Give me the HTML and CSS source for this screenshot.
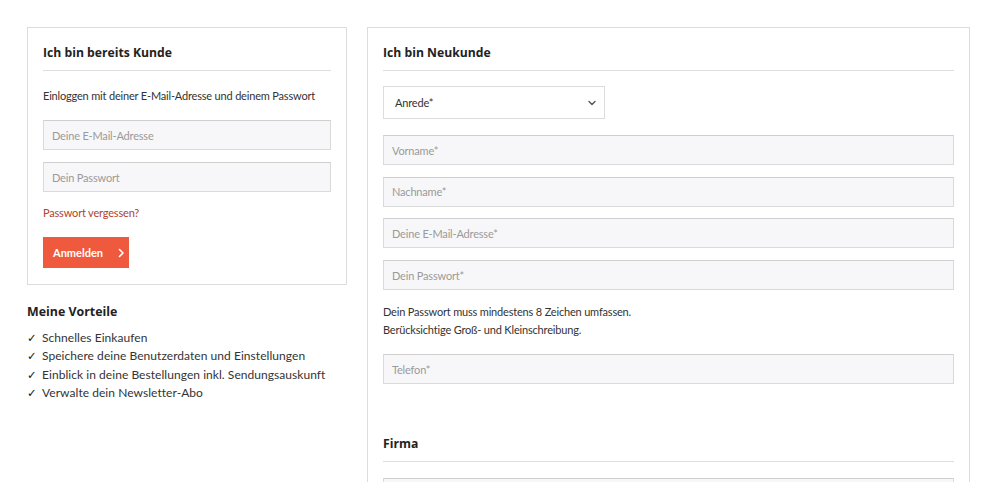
FILE: index.html
```html
<!DOCTYPE html>
<html lang="de">
<head>
<meta charset="utf-8">
<title>Anmelden</title>
<link rel="stylesheet" href="styles.css">
</head>
<body>
<div class="page">
  <div class="col-left">
    <div class="box box-left">
      <h2 class="box-title">Ich bin bereits Kunde</h2>
      <p class="intro">Einloggen mit deiner E-Mail-Adresse und deinem Passwort</p>
      <div class="field"><input class="input" type="email" placeholder="Deine E-Mail-Adresse"></div>
      <div class="field"><input class="input" type="password" placeholder="Dein Passwort"></div>
      <a class="forgot" href="#">Passwort vergessen?</a>
      <button class="btn" type="button">Anmelden
        <svg class="btn-icon" width="8" height="10" viewBox="0 0 8 10"><path d="M2.5 1.5 L6 5 L2.5 8.5" fill="none" stroke="#fff" stroke-width="1.6" stroke-linecap="round" stroke-linejoin="round"/></svg>
      </button>
    </div>
    <h3 class="benefits-title">Meine Vorteile</h3>
    <ul class="benefits">
      <li><span class="check">✓</span>Schnelles Einkaufen</li>
      <li><span class="check">✓</span>Speichere deine Benutzerdaten und Einstellungen</li>
      <li><span class="check">✓</span>Einblick in deine Bestellungen inkl. Sendungsauskunft</li>
      <li><span class="check">✓</span>Verwalte dein Newsletter-Abo</li>
    </ul>
  </div>
  <div class="col-right">
    <div class="box box-right">
      <h2 class="box-title">Ich bin Neukunde</h2>
      <div class="select">
        <span>Anrede*</span>
        <svg width="10" height="8" viewBox="0 0 10 8"><path d="M2 2.5 L5 5.5 L8 2.5" fill="none" stroke="#555" stroke-width="1.4" stroke-linecap="round" stroke-linejoin="round"/></svg>
      </div>
      <div class="field first"><input class="input" type="text" placeholder="Vorname*"></div>
      <div class="field"><input class="input" type="text" placeholder="Nachname*"></div>
      <div class="field"><input class="input" type="email" placeholder="Deine E-Mail-Adresse*"></div>
      <div class="field"><input class="input" type="password" placeholder="Dein Passwort*"></div>
      <p class="hint">Dein Passwort muss mindestens 8 Zeichen umfassen.<br>Berücksichtige Groß- und Kleinschreibung.</p>
      <div class="field tel"><input class="input" type="tel" placeholder="Telefon*"></div>
      <h2 class="box-title section">Firma</h2>
      <div class="field first"><input class="input" type="text" placeholder="Firma"></div>
    </div>
  </div>
</div>
</body>
</html>
```
FILE: styles.css
```css
* { box-sizing: border-box; }
html, body { margin: 0; padding: 0; background: #fff; overflow: hidden; }
body {
  font-family: Lato, "Liberation Sans", sans-serif;
  font-size: 11px;
  letter-spacing: -0.18px;
  color: #333;
}
.page {
  display: flex;
  gap: 20px;
  padding: 27px 30px 0 27px;
  align-items: flex-start;
}
.col-left { width: 320px; flex: none; }
.col-right { width: 603px; flex: none; }
.box {
  border: 1px solid #dcdcdc;
  padding: 15px 15px 15px 15px;
  display: flex;
  flex-direction: column;
  align-items: flex-start;
}
.box-left { padding-bottom: 16px; }
.box-right { padding-bottom: 40px; }
.box-title {
  font-family: "Open Sans", sans-serif;
  font-weight: 700;
  font-size: 12.2px;
  letter-spacing: 0;
  line-height: 20px;
  color: #222;
  margin: 0;
  padding-bottom: 7px;
  border-bottom: 1px solid #dedede;
  align-self: stretch;
}
.box-title.section { margin-top: 50px; }
.intro {
  margin: 16px 0 0;
  line-height: 18px;
  color: #333;
}
.field { align-self: stretch; margin-top: 11.7px; }
.box-left .field { margin-top: 12px; }
.box-left .intro + .field { margin-top: 15px; }
.field.first { margin-top: 16px; }
.field.tel { margin-top: 15px; }
.input {
  display: block;
  width: 100%;
  height: 30px;
  margin: 0;
  padding: 0 8px;
  border: 1px solid #dadada;
  border-top-color: #cfcfcf;
  background: #f7f7f9;
  font-family: Lato, "Liberation Sans", sans-serif;
  font-size: 11px;
  letter-spacing: -0.18px;
  color: #333;
  outline: none;
}
.input::placeholder { color: #9a9a9a; opacity: 1; }
.forgot {
  margin-top: 12px;
  line-height: 18px;
  color: #b0432a;
  text-decoration: none;
}
.btn {
  margin-top: 15px;
  height: 31px;
  width: 86px;
  border: none;
  background: #ef5a3e;
  color: #fff;
  font-family: Lato, "Liberation Sans", sans-serif;
  font-weight: 700;
  font-size: 11px;
  letter-spacing: 0;
  display: flex;
  align-items: center;
  padding: 0 0 0 10px;
  gap: 14px;
}
.btn-icon { display: block; }
.benefits-title {
  font-family: "Open Sans", sans-serif;
  font-weight: 700;
  font-size: 12.4px;
  letter-spacing: 0;
  line-height: 20px;
  color: #222;
  margin: 17px 0 0;
}
.benefits {
  list-style: none;
  margin: 7px 0 0;
  padding: 0;
  font-size: 12px;
  letter-spacing: 0.05px;
  line-height: 18.3px;
  color: #333;
}
.benefits li { display: flex; }
.check {
  width: 15px;
  flex: none;
  font-family: "DejaVu Sans", sans-serif;
  font-size: 11.5px;
  color: #222;
}
.select {
  margin-top: 15px;
  width: 222px;
  height: 33px;
  border: 1px solid #dcdcdc;
  background: #fff;
  display: flex;
  align-items: center;
  justify-content: space-between;
  padding: 0 7px 0 11px;
  color: #333;
}
.hint {
  margin: 13px 0 0;
  line-height: 18px;
}
```
